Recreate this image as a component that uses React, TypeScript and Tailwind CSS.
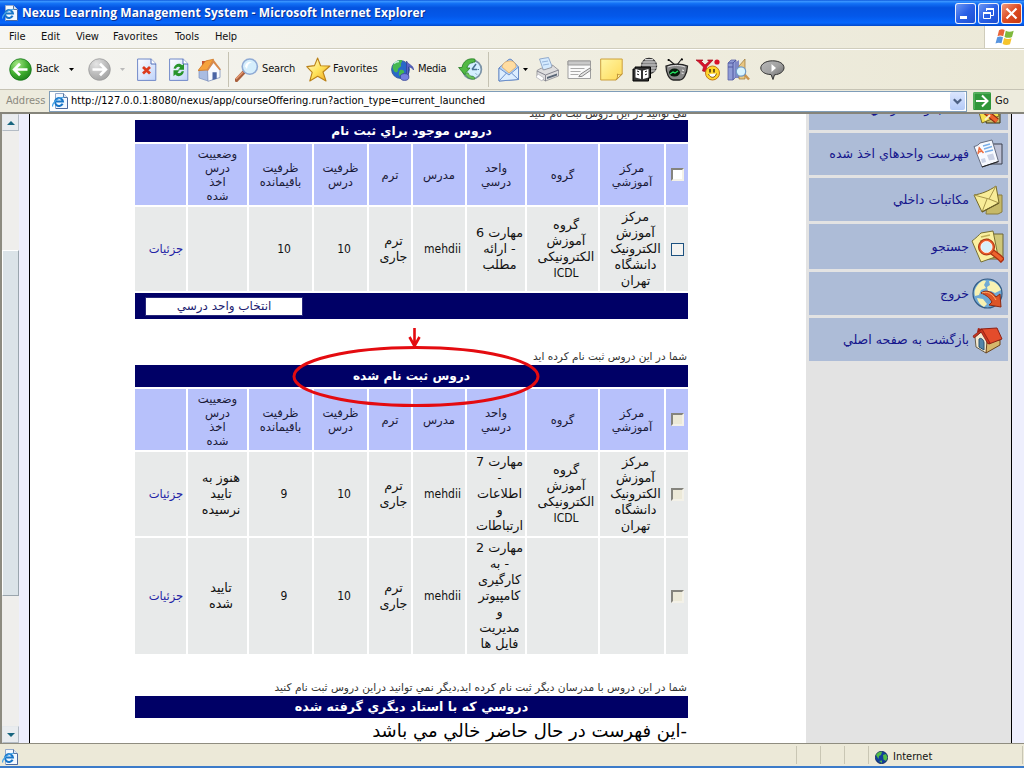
import React from "react";

type Kids = { children?: React.ReactNode };

const ui = "font-['DejaVu_Sans_Condensed','DejaVu_Sans',sans-serif] [font-stretch:condensed]";
const fa = "font-['DejaVu_Sans',sans-serif] [font-stretch:normal]";

/* ---------- small drawings ---------- */

function IePage({ className = "" }: { className?: string }) {
  return (
    <svg className={`shrink-0 ${className}`} width="16" height="16" viewBox="0 0 16 16">
      <path d="M3.5.5h8l4 4v11h-12z" fill="#f3f8ff" stroke="#93a9cc" />
      <path d="M11.5.5v4h4" fill="#dbe6f5" stroke="#5b769f" />
      <path d="M15.5 5v10.500H4" fill="none" stroke="#4c69a0" />
      <path d="M10.600 10.800A4 4 0 1 1 11 8.600H3.400" fill="none" stroke="#1976c8" strokeWidth="2" />
      <path d="M.8 13.500C-.6 10.500 6.500 3.800 12 4.300" fill="none" stroke="#4aa5e8" strokeWidth="1.200" />
    </svg>
  );
}

function Caret({ className = "", color = "#000" }: { className?: string; color?: string }) {
  return (
    <svg className={`shrink-0 ${className}`} width="5" height="3" viewBox="0 0 5 3">
      <path d="M0 0h5L2.5 3z" fill={color} />
    </svg>
  );
}

function RoundArrow({ className = "", from, mid, to, flip }: { className?: string; from: string; mid: string; to: string; flip?: boolean }) {
  const id = flip ? "fwd" : "bck";
  return (
    <svg className={`shrink-0 ${className}`} width="23" height="23" viewBox="0 0 23 23">
      <defs>
        <radialGradient id={id} cx=".35" cy=".25" r=".9">
          <stop offset="0" stopColor={from} />
          <stop offset=".55" stopColor={mid} />
          <stop offset="1" stopColor={to} />
        </radialGradient>
      </defs>
      <circle cx="11.5" cy="11.5" r="10.8" fill={`url(#${id})`} stroke={to} strokeWidth=".8" />
      <path
        d={flip ? "M4.5 11.5h13M12 5.7l5.8 5.8-5.8 5.8" : "M18.5 11.5h-13M11 5.7l-5.8 5.8 5.8 5.8"}
        fill="none"
        stroke="#fff"
        strokeWidth="2.7"
      />
    </svg>
  );
}

function Sheet({ className = "", children }: Kids & { className?: string }) {
  return (
    <svg className={`shrink-0 ${className}`} width="20" height="24" viewBox="0 0 20 24">
      <defs>
        <linearGradient id="sheet" x2="1" y2="1">
          <stop offset="0" stopColor="#fff" />
          <stop offset="1" stopColor="#bfd3fa" />
        </linearGradient>
      </defs>
      <path d="M.6 1h13.6l4.6 4.6V22.4H.6z" fill="url(#sheet)" stroke="#7189c9" />
      <path d="M14 1v5h5" fill="#fff" stroke="#526fb8" />
      {children}
    </svg>
  );
}

function Home({ className = "" }) {
  return (
    <svg className={`shrink-0 ${className}`} width="24" height="24" viewBox="0 0 24 24">
      <path d="M4 3h4v6H4z" fill="#c65332" />
      <path d="M1 12v8l9 3V11z" fill="#a9bce2" stroke="#7a8fc0" strokeWidth=".7" />
      <path d="M9.5 11.5 16 4l6 7v8.5L10 23.3z" fill="#f8faff" stroke="#7f92bb" strokeWidth=".8" />
      <path d="M0 12.6 7.5 3l8-1.8L9.4 12z" fill="#f5a23d" stroke="#cf7724" strokeWidth=".8" />
      <path d="M15.3 1.2 23 11.6l-1.6.7-6-7.2-5.4 7.8-1.4-.7z" fill="#d98a4c" />
      <path d="M14.5 14.3h4.2v6.4l-4.2 1.3z" fill="#4b65a5" />
    </svg>
  );
}

function Magnifier({ className = "" }) {
  return (
    <svg className={`shrink-0 ${className}`} width="24" height="24" viewBox="0 0 24 24">
      <path d="m9 14-7.500 8" stroke="#a85e3c" strokeWidth="4" strokeLinecap="round" />
      <path d="m8 14-7 7" stroke="#e69a72" strokeWidth="1.500" />
      <circle cx="14.800" cy="8.600" r="7.600" fill="#d5eefc" stroke="#8faad4" strokeWidth="1.600" />
      <path d="M10 8.500a5 5 0 0 1 7-4.200C14 5 12.500 7 12 11z" fill="#fff" />
    </svg>
  );
}

function Star({ className = "" }) {
  return (
    <svg className={`shrink-0 ${className}`} width="25" height="25" viewBox="0 0 25 25">
      <defs>
        <linearGradient id="star" x2="1" y2="1">
          <stop offset="0" stopColor="#fffce0" />
          <stop offset=".5" stopColor="#ffe45c" />
          <stop offset="1" stopColor="#efa31a" />
        </linearGradient>
      </defs>
      <path d="m11.6 1 3 7.7 9.4.3-7 6 3 9-8.300-4.800L3.800 24l2.400-8.600L.8 9.600l7.700-1z" fill="url(#star)" stroke="#ba8118" strokeWidth="1.100" strokeLinejoin="round" />
    </svg>
  );
}

function MediaIcon({ className = "" }) {
  return (
    <svg className={`shrink-0 ${className}`} width="24" height="24" viewBox="0 0 24 24">
      <circle cx="9.500" cy="11.500" r="9" fill="#2868c8" stroke="#2a4c87" strokeWidth=".7" />
      <path d="M2 7c2-4 6-5.500 9-5 1 2-2 3-1 5s-3 2-3 5-3 3-4 1-2-3-1-6zM9 12c3-1 5 1 4 3l-4 3c-2-1-1-4 0-6z" fill="#45b850" />
      <path d="M3 5.500c2-2 3-2 5-2" stroke="#c7f0db" strokeWidth="1.500" fill="none" />
      <path d="M15.500 18V3c2 4 7 4 7 9-2-3-4-3-5-3v9z" fill="#5964c7" stroke="#29378c" strokeWidth=".6" />
      <ellipse cx="13.600" cy="19" rx="4.300" ry="3.400" fill="#747fe0" stroke="#344194" strokeWidth=".8" />
    </svg>
  );
}

function HistoryIcon({ className = "" }) {
  return (
    <svg className={`shrink-0 ${className}`} width="25" height="23" viewBox="0 0 25 23">
      <circle cx="14" cy="11.500" r="9.400" fill="#d4efff" stroke="#7c93a7" strokeWidth="1.700" />
      <path d="M14 11.500 18 6M14 11.500h5" stroke="#477192" strokeWidth="1.500" />
      <path d="M14 4v1.500M21 11.500h-1.500M14 19v-1.500M18.800 16.500l-1-1" stroke="#5580a0" />
      <path d="M17 1.200C10-.5 5 3.500 4 9.500H.6l5.800 7 5.600-6.500H9c.4-3 3-5.500 8-6z" fill="#52b943" stroke="#247c25" strokeWidth=".8" />
      <path d="M7 16c2 4 6 5.800 10 5l-1-2.300c-3 .3-5-1.500-6-4z" fill="#6ec35a" stroke="#247c25" strokeWidth=".6" />
    </svg>
  );
}

function MailIcon({ className = "" }) {
  return (
    <svg className={`shrink-0 ${className}`} width="22" height="24" viewBox="0 0 22 24">
      <path d="M1 10 10 2q2-2 4 0l6.500 7v12.500L1 23z" fill="#b1d2f8" stroke="#6588c4" />
      <path d="M4 9c1-5 5-6 9-6 3 0 5 3 5 6l-7 6z" fill="#ffdda2" stroke="#e2a95a" strokeWidth=".7" />
      <path d="m1 10 10 7 9.500-8v12.500L1 23z" fill="#dceeff" stroke="#5b81c1" strokeWidth=".8" />
      <path d="m1 23 7.500-8M20.500 21.500l-7-6.500" stroke="#6c91cb" />
    </svg>
  );
}

function PrinterIcon({ className = "" }) {
  return (
    <svg className={`shrink-0 ${className}`} width="24" height="25" viewBox="0 0 24 25">
      <path d="m3.500 2 9-1.500 4 10-9 3z" fill="#d4eafe" stroke="#7d9bc4" strokeWidth=".8" />
      <path d="m6 5 6-1M7 8l6-1" stroke="#96b5dc" />
      <path d="M1 13.500 5.500 11l2 2 8-2.500 1-2.500 6 5v6l-13 5L1 19z" fill="#dededf" stroke="#8a8a91" strokeWidth=".8" />
      <path d="m1 14 8.500 4 13-5M9.500 18v6" fill="none" stroke="#85858f" />
      <path d="m11 20 10-3.500v2L11 22z" fill="#596575" />
      <path d="m2 17 6 4-2 3-6-4z" fill="#fff" stroke="#a5a5ac" strokeWidth=".6" />
    </svg>
  );
}

function EditIcon({ className = "" }) {
  return (
    <svg className={`shrink-0 ${className}`} width="25" height="20" viewBox="0 0 25 20">
      <path d="M1 1h22.500v17.500H1z" fill="#fafafa" stroke="#9f9f9f" />
      <path d="M1 1h22.500v4H1z" fill="#c9c9c9" stroke="#999" />
      <path d="M3.500 8.500h14M3.500 11.500h10M3.500 14.500h8" stroke="#aaa" />
      <path d="m23 8-9.500 6.200-1.700 2.500 3.300-.4L24 10z" fill="#e5e5e5" stroke="#858585" />
    </svg>
  );
}

function NoteIcon({ className = "" }) {
  return (
    <svg className={`shrink-0 ${className}`} width="23" height="23" viewBox="0 0 23 23">
      <defs>
        <linearGradient id="note" x2="1" y2="1">
          <stop offset="0" stopColor="#fff6a5" />
          <stop offset="1" stopColor="#ffd958" />
        </linearGradient>
      </defs>
      <path d="M.7 1h21.500v15l-6 6H.7z" fill="url(#note)" stroke="#cca03d" />
      <path d="M22.200 16c-2 1.500-4 .6-4.800 0 .6 3-.4 5-1.500 6z" fill="#fff0a0" stroke="#c19439" />
    </svg>
  );
}

function ResearchIcon({ className = "" }) {
  return (
    <svg className={`shrink-0 ${className}`} width="26" height="25" viewBox="0 0 26 25">
      <circle cx="17" cy="9" r="7.600" fill="#888" stroke="#333" strokeWidth="1.200" />
      <path d="M10 5h14M9 8h16M9 11h16M10 14h14M13 2.500h8" stroke="#d1d1d1" />
      <path d="M1 12h2v-2h15.500v11h-2v3H1z" fill="#333" stroke="#000" />
      <path d="M3.500 12 9 13.500V22l-5.500-1.500zM16.500 12 11 13.500V22l5.500-1.500z" fill="#fff" />
      <path d="m5 14 2 .8M5 17l2 .8m8-3.800-2 .8m2 2.200-2 .8" stroke="#222" />
    </svg>
  );
}

function TvIcon({ className = "" }) {
  return (
    <svg className={`shrink-0 ${className}`} width="24" height="24" viewBox="0 0 24 24">
      <path d="M10 7 3.500 1.500M12 7l5-6.500" stroke="#222" strokeWidth="1.200" />
      <circle cx="3.500" cy="2" r="1" />
      <circle cx="17" cy="1.500" r="1" />
      <path d="M1 8c6-2.500 16-2.500 21.500 0-.5 8-4 14-8 14H8.500C4 21.500 1 15 1 8z" fill="#888" stroke="#222" strokeWidth="1.300" />
      <path d="M3 9c5-2 12-2 17 0" stroke="#ddd" fill="none" />
      <ellipse cx="9.500" cy="14.500" rx="5.500" ry="4" fill="#071b0b" />
      <path d="m5 16 3-2 2 1 3-2" stroke="#25e262" strokeWidth="1.400" fill="none" />
      <path d="m17 12 2 .5M16.500 15l2 .5" stroke="#eee" />
    </svg>
  );
}

function MessengerIcon({ className = "" }) {
  return (
    <svg className={`shrink-0 ${className}`} width="25" height="24" viewBox="0 0 25 24">
      <path d="M0 2h7l-1.500 1.500L9 7l4-3.500L11.500 2H17l-6.500 7 1 5-5-1 1-4L2 3.500z" fill="#d9122a" stroke="#a50d1e" strokeWidth=".7" />
      <circle cx="21" cy="4" r="2.600" fill="#d9122a" />
      <circle cx="16.500" cy="15" r="7" fill="#ffd62b" stroke="#c57818" />
      <path d="M14 11v3.500M18 11v3.500" stroke="#493110" strokeWidth="1.500" />
      <path d="M12.500 16c2 4.500 6.500 4.500 8-.5" fill="#fff" stroke="#80551a" />
    </svg>
  );
}

function BooksIcon({ className = "" }) {
  return (
    <svg className={`shrink-0 ${className}`} width="24" height="24" viewBox="0 0 24 24">
      <path d="m1 5 3-3h5v17l-3 3H1z" fill="#8f9cd6" stroke="#5a63a6" strokeWidth=".8" />
      <path d="M1 5h5v17M6 5l3-3M1 9h5" fill="none" stroke="#5158a0" />
      <path d="m9 4 3-2v18H9z" fill="#7f88c6" />
      <path d="m12 8 6-7v20h-6z" fill="#e9c783" stroke="#987232" strokeWidth=".7" />
      <path d="m17 16 5 5.500" stroke="#c9924d" strokeWidth="2.500" />
      <circle cx="14" cy="13.500" r="4.700" fill="#d8f4ff" stroke="#6f9ac9" strokeWidth="1.200" />
    </svg>
  );
}

function BubbleIcon({ className = "" }) {
  return (
    <svg className={`shrink-0 ${className}`} width="25" height="20" viewBox="0 0 25 20">
      <defs>
        <linearGradient id="bubble" x2="1" y2="1">
          <stop offset="0" stopColor="#b8b8b8" />
          <stop offset=".5" stopColor="#a2a2a2" />
          <stop offset="1" stopColor="#5d5d5d" />
        </linearGradient>
      </defs>
      <path d="M12.500.8c7 0 11.500 3 11.500 7 0 3.500-4 6.700-9.500 7L13 19.500l-2-5C5 14.500.8 11.500.8 8c0-4 5-7.200 11.700-7.200z" fill="url(#bubble)" stroke="#333" />
      <path d="m11.500 4 4.500 4-4.500 4z" fill="#fff" />
    </svg>
  );
}

function WindowsFlag() {
  return (
    <svg width="20" height="18" viewBox="0 0 20 18">
      <path d="M4 2.200C6 .7 8 1 9.700 2L8.200 8.200C6.200 7.200 4.200 7.200 2.500 8.200z" fill="#e8643a" />
      <path d="M10.800 2.700c2.500 1.300 5 1.200 7.900 0L17 8.900c-2.500 1.200-5.100 1.100-7.500 0z" fill="#7fb93d" />
      <path d="M2.200 9.300c2-1 4-.8 5.800 0l-1.500 6C4.500 14.300 2.300 14.500.5 15.500z" fill="#5794df" />
      <path d="M9.100 10c2.400 1.100 5 1.200 7.500.2L15 16.300c-2.500 1.200-5 1-7.400-.2z" fill="#f5c42c" />
    </svg>
  );
}

/* ---------- sidebar drawings ---------- */

function PencilNoteIcon() {
  return (
    <svg className="shrink-0" width="30" height="32" viewBox="0 0 30 32">
      <path d="M17 8h10v22H13z" fill="#c6b968" stroke="#3b3414" />
      <path d="M3 9 21 3l5 20-17 7z" fill="#f6e24e" stroke="#776b2b" />
      <path d="m8 15 16 13" stroke="#8e2910" strokeWidth="6" />
      <path d="m8 15 16 13" stroke="#ed632c" strokeWidth="3.600" />
      <path d="m12 27 5-5" stroke="#f7f0c4" strokeWidth="2" />
    </svg>
  );
}

function PapersIcon() {
  return (
    <svg className="shrink-0" width="30" height="30" viewBox="0 0 30 30">
      <path d="M18 5h11v20H14" fill="#bcc0d4" stroke="#3b3e4d" />
      <path d="M1 7.500c3-.5 5-2 6-3.500L19 1l6.500 21.500L9 28z" fill="#f8faff" stroke="#666d80" />
      <path d="m9 28 16.500-5.500" stroke="#222" strokeWidth="1.200" />
      <path d="m5 15 1.300-6 4.200 5M6 13l3-1" fill="none" stroke="#ed7043" strokeWidth="1.500" />
      <path d="m10 7 7-2M11 10l8-2.500M12 13l8-2" stroke="#7bafe8" strokeWidth="1.400" />
      <path d="m8 20 4-1 1 4-4 1zM14 16l6-1.500 2 6-6 1z" fill="#ccd3e6" />
    </svg>
  );
}

function EnvelopesIcon() {
  return (
    <svg className="shrink-0" width="30" height="30" viewBox="0 0 30 30">
      <path d="M15 10h14v17l-4 2H13z" fill="#c6b968" stroke="#8a7d3c" />
      <path d="M1 10c7-1 15-4 22-9l3 17-17 9z" fill="#f8ed98" stroke="#776b2b" />
      <path d="m1 10 15 4 7-13M9 27l5-13m12 4-10-4" fill="none" stroke="#a8974a" />
      <path d="m9 27 17-9" stroke="#6b5f28" strokeWidth="1.200" />
    </svg>
  );
}

function FindIcon() {
  return (
    <svg className="shrink-0" width="33" height="33" viewBox="0 0 33 33">
      <path d="M20 4h12v25H15z" fill="#cfc779" stroke="#6c6536" />
      <path d="M1 11C5 8 8 5 10 3l12-2 5 25-17 6z" fill="#faf0a0" stroke="#777034" />
      <path d="m10 7 9-2M9 11l9-2" stroke="#c1af57" strokeWidth="1.500" />
      <path d="m20 21 8 6 4 4" stroke="#ad2f11" strokeWidth="6" />
      <path d="m20 21 8 6 3 3" stroke="#ed632c" strokeWidth="3.500" />
      <circle cx="15.500" cy="17" r="8" fill="#e95a28" stroke="#a63111" />
      <circle cx="15.500" cy="17" r="5.600" fill="#d7f0fa" stroke="#fff" strokeWidth=".8" />
    </svg>
  );
}

function GlobeExitIcon() {
  return (
    <svg className="shrink-0" width="31" height="31" viewBox="0 0 31 31">
      <circle cx="15.500" cy="15.500" r="14.500" fill="#6fa9d5" stroke="#335a83" strokeWidth="1.200" />
      <path d="M5 8c4-6 8-6 9-5l-2 4 2 3-5 2-2 5-4 1c-1-5 0-7 2-10zM17 3c6 0 10 4 12 9l-6 3-4-2-3 1-1-5 3-2zM5 20l6 1 4 5-3 3C8 27 6 24 5 20z" fill="#f8f2b2" />
      <path d="M9 15c5-4 12-1 15 4l4-3 1 13-12-2 3-3c-3-5-6-7-11-9z" fill="#dc5528" stroke="#8e2910" />
      <path d="M10 15c5-2 10 0 14 7" fill="none" stroke="#ffae69" />
    </svg>
  );
}

function RedHouseIcon() {
  return (
    <svg className="shrink-0" width="31" height="28" viewBox="0 0 31 28">
      <path d="M3 11 12 4l8 9-6 14L4 21z" fill="#f4ead0" stroke="#665c49" />
      <path d="m15 15 13-1v5l-14 8z" fill="#d5b76c" stroke="#6b421c" />
      <path d="m5 6 1-4 4 1-1 4z" fill="#a62516" />
      <path d="m9 3 16-1 5 11-13 5z" fill="#e44c2b" stroke="#8d2114" />
      <path d="m1 10 9-7 8 14-2 1L9 6l-7 6z" fill="#c93620" stroke="#82190f" strokeWidth=".7" />
      <path d="M7 13c2-2 5 1 5 4v7l-5-3z" fill="#5285a9" stroke="#295271" />
    </svg>
  );
}

/* ---------- window chrome ---------- */

function TitleBar() {
  const btn = "flex h-[21px] w-[21px] items-center justify-center rounded-[3px] border border-white/90";
  return (
    <div className="flex h-[26px] shrink-0 items-center bg-[linear-gradient(#0a53d8_0,#3a95ff_5%,#1270f5_14%,#0453e0_30%,#0458ea_62%,#0667fd_88%,#0348c9_100%)] pl-[2px] pr-[2px]">
      <IePage />
      <div className="ml-[4px] flex-1 whitespace-nowrap font-['Open_Sans','Noto_Sans',sans-serif] text-[12px] font-bold leading-[26px] tracking-[0.11px] text-white [text-shadow:1px_1px_0_#0a3190]">
        Nexus Learning Management System - Microsoft Internet Explorer
      </div>
      <div className="flex gap-[2px]">
        <div className={`${btn} bg-[linear-gradient(135deg,#6d97f3,#2a60e6_50%,#1c4fd2)]`}>
          <svg width="19" height="19" viewBox="0 0 19 19"><path d="M4 12h7v3H4z" fill="#fff" /></svg>
        </div>
        <div className={`${btn} bg-[linear-gradient(135deg,#6d97f3,#2a60e6_50%,#1c4fd2)]`}>
          <svg width="19" height="19" viewBox="0 0 19 19">
            <path d="M7.500 7V4.500h7v7H12M4.500 8.500h7v6h-7z" fill="none" stroke="#fff" />
            <path d="M7 4h8v2H7zM4 8h8v2H4z" fill="#fff" />
          </svg>
        </div>
        <div className={`${btn} bg-[linear-gradient(135deg,#ef9a7c,#dd4b22_50%,#c63a12)]`}>
          <svg width="19" height="19" viewBox="0 0 19 19"><path d="m4.500 4.500 10 10m0-10-10 10" stroke="#fff" strokeWidth="2.200" /></svg>
        </div>
      </div>
    </div>
  );
}

function MenuBar() {
  return (
    <div className="flex h-[23px] shrink-0 border-b border-[#d0cdbd] bg-[linear-gradient(90deg,#f6f6f3,#efede0_60%,#ece9d8)]">
      <div className={`flex flex-1 pl-[9px] text-[11px] leading-[21px] text-[#111] ${ui}`}>
        <span className="w-[32px]">File</span>
        <span className="w-[35px]">Edit</span>
        <span className="w-[37px] tracking-[-0.2px]">View</span>
        <span className="w-[62px]">Favorites</span>
        <span className="w-[40px]">Tools</span>
        <span className="tracking-[-0.2px]">Help</span>
      </div>
      <div className="flex w-[40px] items-center justify-center border-l border-[#cfccbb] bg-white">
        <WindowsFlag />
      </div>
    </div>
  );
}

function ToolBar() {
  const sep = "h-[35px] w-px shrink-0 bg-[#c5c2b2]";
  return (
    <div className={`flex h-[40px] shrink-0 items-center border-t border-white bg-[linear-gradient(90deg,#f5f5f2,#efede0_60%,#ebe8d6)] pl-[9px] text-[11px] text-[#111] ${ui}`}>
      <RoundArrow from="#a4e783" mid="#3dab2d" to="#17761a" />
      <span className="ml-[4px] w-[33px] tracking-[-0.3px]">Back</span>
      <Caret />
      <RoundArrow className="ml-[14px]" from="#e5e5e5" mid="#b9b9b9" to="#9b9b9b" flip />
      <Caret className="ml-[9px]" color="#bbb" />
      <Sheet className="ml-[12px]">
        <path d="m6 9 7 6.500m0-6.500-7 6.500" stroke="#dc3b1d" strokeWidth="2.800" />
      </Sheet>
      <Sheet className="ml-[12px]">
        <path d="M4.500 10.500C6 5 11 4.500 13.300 7.300l1.700-1.800v6.300H9l2.200-2.200C9.500 8 7.500 9 7 10.800zM15 13.300c-1.200 5.400-6.500 6-8.700 3.200L4.500 18.300V12.300h6.200l-2.200 2.200c1.500 1.500 3.700.5 4.200-1.200z" fill="#27942b" />
      </Sheet>
      <Home className="ml-[9px]" />
      <div className={`ml-[6px] ${sep}`} />
      <Magnifier className="ml-[6px]" />
      <span className="ml-[3px] w-[44px] tracking-[-0.15px]">Search</span>
      <Star />
      <span className="ml-[2px] w-[58px]">Favorites</span>
      <MediaIcon />
      <span className="ml-[3px] w-[40px] tracking-[-0.3px]">Media</span>
      <HistoryIcon />
      <div className={`ml-[5px] ${sep}`} />
      <MailIcon className="ml-[9px]" />
      <Caret className="ml-[3px]" />
      <PrinterIcon className="ml-[8px]" />
      <EditIcon className="ml-[7px]" />
      <NoteIcon className="ml-[8px]" />
      <ResearchIcon className="ml-[9px]" />
      <TvIcon className="ml-[7px]" />
      <MessengerIcon className="ml-[7px]" />
      <BooksIcon className="ml-[6px]" />
      <BubbleIcon className="ml-[9px]" />
    </div>
  );
}

function AddressBar() {
  return (
    <div className={`flex h-[25px] shrink-0 items-center border-b-2 border-t border-b-[#85847a] border-t-[#c6c3b4] bg-[#edebdd] text-[11px] ${ui}`}>
      <span className="w-[49px] pl-[6px] text-[#8b897e]">Address</span>
      <div className="flex h-[21px] w-[918px] items-center border border-[#7f9db9] bg-white pl-[2px] pr-px">
        <IePage />
        <span className="ml-[3px] flex-1 whitespace-nowrap text-black">
          http://127.0.0.1:8080/nexus/app/courseOffering.run?action_type=current_launched
        </span>
        <div className="flex h-[18px] w-[15px] items-center justify-center rounded-[2px] bg-[linear-gradient(#dbe6fe,#b4caf7)]">
          <svg width="9" height="7" viewBox="0 0 9 7"><path d="m.8 1.200 3.700 3.700 3.700-3.700" fill="none" stroke="#4d6185" strokeWidth="2.200" /></svg>
        </div>
      </div>
      <svg className="ml-[6px]" width="18" height="18" viewBox="0 0 18 18">
        <rect width="18" height="18" rx="1.500" fill="#2f963a" />
        <path d="M1 17V1h16" fill="none" stroke="#72c478" />
        <path d="M3 9h11M9 3.500 14.500 9 9 14.500" fill="none" stroke="#fff" strokeWidth="2" />
      </svg>
      <span className="ml-[4px] text-[#111]">Go</span>
    </div>
  );
}

function ScrollBar() {
  const btn = "flex h-[17px] shrink-0 items-center justify-center border border-[#b4bcc5] border-l-[#e5e9ec] border-t-[#e5e9ec] bg-[#e9ecef]";
  return (
    <div className="flex w-[19px] shrink-0 flex-col border-l-2 border-[#8d8b80] bg-[#efeeec]">
      <div className={btn}>
        <svg width="8" height="4" viewBox="0 0 8 4"><path d="M0 4h8L4 0z" fill="#17657f" /></svg>
      </div>
      <div className="h-[119px]" />
      <div className="h-[346px] border border-[#9aa5ad] border-l-white border-t-white bg-[#dbe3e8]" />
      <div className="flex-1" />
      <div className={btn}>
        <svg width="8" height="4" viewBox="0 0 8 4"><path d="M0 0h8L4 4z" fill="#17657f" /></svg>
      </div>
    </div>
  );
}

/* ---------- page content ---------- */

const cols = "grid grid-cols-[51px_59px_63px_53px_42px_52px_58px_71px_64px_22px] gap-x-[2px]";

const isPersian = (s: string) => /[\u0600-\u06ff]/.test(s);

function Lines({ text, size }: { text: string; size: string }) {
  return (
    <>
      {text.split("|").map((line, i) => (
        <div key={i} dir="rtl" className={`whitespace-nowrap ${isPersian(line) ? `${fa} ${size}` : `${ui} text-[12px]`}`}>
          {line}
        </div>
      ))}
    </>
  );
}

function Check({ kind }: { kind: "open" | "flat" | "off" }) {
  if (kind === "flat") return <div className="h-[13px] w-[13px] border border-[#1c5180] bg-[#f3f3f1]" />;
  return (
    <div
      className={`h-[13px] w-[13px] border-2 border-b-[#f3f1e8] border-l-[#85847d] border-r-[#f3f1e8] border-t-[#85847d] ${kind === "off" ? "bg-[#ece9d8]" : "bg-white"}`}
    />
  );
}

function TitleRow({ children, size }: Kids & { size: string }) {
  return (
    <div dir="rtl" className={`h-[22px] shrink-0 whitespace-nowrap bg-[#000066] text-center font-bold leading-[22px] text-white ${size}`}>
      {children}
    </div>
  );
}

const headers = ["", "وضعييت|درس|اخذ|شده", "ظرفيت|باقيمانده", "ظرفيت|درس", "ترم", "مدرس", "واحد|درسي", "گروه", "مرکز|آموزشي"];

function HeaderRow({ check }: { check: "open" | "off" }) {
  return (
    <div className={`mt-[2px] h-[61px] ${cols}`}>
      {headers.map((h, i) => (
        <div key={i} className="flex flex-col items-center justify-center bg-[#b7c1fb] leading-[14px] text-[#1a1a38]">
          <Lines text={h} size="text-[11.6px]/[14px]" />
        </div>
      ))}
      <div className="flex items-center justify-center bg-[#b7c1fb]"><Check kind={check} /></div>
    </div>
  );
}

function DataRow({ cells, check, className }: { cells: string[]; check: "flat" | "off"; className: string }) {
  return (
    <div className={`mt-[2px] ${cols} ${className}`}>
      {cells.map((c, i) => (
        <div
          key={i}
          className={`flex flex-col items-center justify-center bg-[#e8eaea] leading-[16px] ${i === 0 ? "pl-[11px] text-[#2222a5]" : "pl-[7px] text-[#111]"}`}
        >
          <Lines text={c} size={i === 0 ? "text-[11.5px]/[16px]" : "text-[12.8px]/[16px]"} />
        </div>
      ))}
      <div className="flex items-center justify-center bg-[#e8eaea]"><Check kind={check} /></div>
    </div>
  );
}

const center = "مرکز|آموزش|الکترونیک|دانشگاه|تهران";
const group = "گروه|آموزش|الکترونیکی|ICDL";

function Courses() {
  return (
    <div className={`relative ml-[105px] flex w-[553px] flex-col leading-[16px] ${fa}`}>
      <div className="flex h-[6px] shrink-0 items-end overflow-hidden">
        <div dir="rtl" className="w-full pr-px text-[10.5px] leading-[14px] text-[#333]">مي توانيد در اين دروس ثبت نام کنيد</div>
      </div>
      <TitleRow size="text-[12.2px]">دروس موجود براي ثبت نام</TitleRow>
      <HeaderRow check="open" />
      <DataRow
        className="h-[84px]"
        check="flat"
        cells={["جزئیات", "", "10", "10", "ترم|جاری", "mehdii", "مهارت 6|- ارائه|مطلب", group, center]}
      />
      <div className="mt-[2px] flex h-[26px] shrink-0 items-center bg-[#000066] pl-[10px]">
        <button dir="rtl" className="h-[19px] w-[158px] whitespace-nowrap border border-[#27277b] bg-white text-[12px] leading-[16px] text-[#1c1c70]">انتخاب واحد درسي</button>
      </div>

      <div dir="rtl" className="mt-[30px] h-[16px] shrink-0 pr-px text-[10.5px] leading-[15px] text-[#333]">شما در اين دروس ثبت نام کرده ايد</div>
      <TitleRow size="text-[12.2px]">دروس ثبت نام شده</TitleRow>
      <HeaderRow check="off" />
      <DataRow
        className="h-[84px]"
        check="off"
        cells={["جزئیات", "هنوز به|تایید|نرسیده", "9", "10", "ترم|جاری", "mehdii", "مهارت 7|-|اطلاعات|و|ارتباطات", group, center]}
      />
      <DataRow
        className="h-[116px]"
        check="off"
        cells={["جزئیات", "تایید|شده", "9", "10", "ترم|جاری", "mehdii", "مهارت 2|- به|کارگیری|کامپیوتر|و|مدیریت|فایل ها", "", ""]}
      />

      <div dir="rtl" className="mt-[26px] h-[16px] shrink-0 whitespace-nowrap pr-px text-[10.6px] leading-[15px] text-[#333]">
        شما در اين دروس با مدرسان ديگر ثبت نام کرده ايد,ديگر نمي توانيد دراين دروس ثبت نام کنيد
      </div>
      <TitleRow size="text-[12.7px]">دروسي که با استاد ديگري گرفته شده</TitleRow>
      <div dir="rtl" className="h-[25px] whitespace-nowrap pr-px text-[18px] leading-[25px] text-black">-اين فهرست در حال حاضر خالي مي باشد</div>

      <svg className="pointer-events-none absolute left-[156px] top-[212px]" width="250" height="84" viewBox="0 0 250 84" fill="none" stroke="#e40b10">
        <ellipse cx="125" cy="50.500" rx="122" ry="29" strokeWidth="3" />
        <path d="M123.500 2v18M118.500 11l5 9 5-9" strokeWidth="2.600" />
      </svg>
    </div>
  );
}

function SideLink({ label, icon, className }: { label: string; icon: React.ReactNode; className: string }) {
  return (
    <div dir="rtl" className={`flex shrink-0 items-center gap-[3px] bg-[#adbcd7] pr-[5px] ${className}`}>
      <div className="flex w-[31px] justify-center">{icon}</div>
      <span className="whitespace-nowrap text-[12.6px] leading-[18px] text-[#15158c]">{label}</span>
    </div>
  );
}

function Sidebar() {
  return (
    <div className={`flex w-[205px] shrink-0 flex-col gap-[3px] bg-[#e3e3e3] pl-[3px] pr-[3px] ${fa}`}>
      <div className="flex h-[16px] shrink-0 items-end overflow-hidden">
        <SideLink className="h-[43px] w-full" label="انتخاب واحد درسي" icon={<PencilNoteIcon />} />
      </div>
      <SideLink className="h-[42px]" label="فهرست واحدهاي اخذ شده" icon={<PapersIcon />} />
      <SideLink className="h-[43px]" label="مکاتبات داخلي" icon={<EnvelopesIcon />} />
      <SideLink className="h-[45px]" label="جستجو" icon={<FindIcon />} />
      <SideLink className="h-[43px]" label="خروج" icon={<GlobeExitIcon />} />
      <SideLink className="h-[43px]" label="بازگشت به صفحه اصلي" icon={<RedHouseIcon />} />
    </div>
  );
}

function StatusBar() {
  return (
    <div className={`flex h-[25px] shrink-0 items-center border-b-2 border-t border-b-[#3c7bc9] border-t-[#8f8d80] bg-[#ece9d8] text-[11px] ${ui}`}>
      <div className="flex-1 pl-[2px] pt-[4px]"><IePage /></div>
      <div className="h-[18px] w-[24px] border-l border-[#c9c6b4]" />
      <div className="h-[18px] w-[24px] border-l border-[#c9c6b4]" />
      <div className="h-[18px] w-[24px] border-l border-[#c9c6b4]" />
      <div className="mr-[1px] flex h-[18px] w-[155px] items-center border-l border-r border-[#c9c6b4] pl-[6px] pt-[4px]">
        <svg width="13" height="13" viewBox="0 0 13 13">
          <circle cx="6.500" cy="6.500" r="6.200" fill="#123f9b" stroke="#08204c" strokeWidth=".7" />
          <path d="M1 4c2-3 4-3.500 6-3L6 4 4 5 3.500 8zM8 4l3-1 1.500 3.500L11 10 8.500 8.500zM4 10l3-.5v2.500z" fill="#53bd45" />
        </svg>
        <span className="ml-[5px] text-[#111]">Internet</span>
      </div>
    </div>
  );
}

export default function App() {
  return (
    <div className="flex h-[768px] w-[1024px] flex-col overflow-hidden bg-white">
      <TitleBar />
      <MenuBar />
      <ToolBar />
      <AddressBar />
      <div className="flex h-[629px] shrink-0 overflow-hidden">
        <ScrollBar />
        <div className="w-[11px] shrink-0 border-r border-black bg-[#eeeffd]" />
        <div className="w-[776px] shrink-0 bg-white">
          <Courses />
        </div>
        <Sidebar />
        <div className="flex-1 border-l border-black bg-[#eeeffd]" />
      </div>
      <StatusBar />
    </div>
  );
}
